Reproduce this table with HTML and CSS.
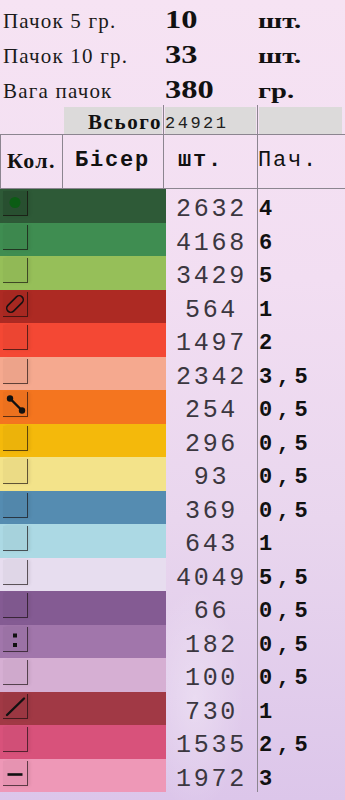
FILE: index.html
```html
<!DOCTYPE html>
<html lang="uk">
<head>
<meta charset="utf-8">
<title>Бісер</title>
<link rel="stylesheet" href="styles.css">
</head>
<body>
<div class="page">
  <div class="summary">
    <div class="srow"><span class="slabel">Пачок 5 гр.</span><span class="sval">10</span><span class="sunit">шт.</span></div>
    <div class="srow"><span class="slabel">Пачок 10 гр.</span><span class="sval">33</span><span class="sunit">шт.</span></div>
    <div class="srow"><span class="slabel">Вага пачок</span><span class="sval">380</span><span class="sunit">гр.</span></div>
  </div>

  <div class="total">
    <div class="tcell tcell-empty"></div>
    <div class="tcell"><div class="tbox tbox-label">Всього</div></div>
    <div class="tcell tcell-line"><div class="tbox tbox-num">24921</div></div>
    <div class="tcell tcell-line"><div class="tbox"></div></div>
  </div>

  <div class="head">
    <div class="hcell hcell-first"><span class="h-serif">Кол.</span></div>
    <div class="hcell hcell-bead"><span class="h-mono h-bold">Бісер</span></div>
    <div class="hcell hcell-pcs"><span class="h-mono h-bold">шт.</span></div>
    <div class="hcell hcell-pack"><span class="h-mono">Пач.</span></div>
  </div>

  <div class="body">
    <div class="row"><div class="swatch c1"><span class="mark mark-dark"><svg viewBox="0 0 24 24" width="24" height="24"><circle cx="12" cy="11.5" r="5.5" fill="#0b5c14"/></svg></span></div><div class="num">2632</div><div class="pack">4</div></div>
    <div class="row"><div class="swatch c2"><span class="mark"></span></div><div class="num">4168</div><div class="pack">6</div></div>
    <div class="row"><div class="swatch c3"><span class="mark"></span></div><div class="num">3429</div><div class="pack">5</div></div>
    <div class="row"><div class="swatch c4"><span class="mark"><svg viewBox="0 0 24 24" width="24" height="24"><rect x="2" y="8" width="20" height="8" rx="4" transform="rotate(-45 12 12)" fill="none" stroke="#151010" stroke-width="1.6"/></svg></span></div><div class="num">564</div><div class="pack">1</div></div>
    <div class="row"><div class="swatch c5"><span class="mark"></span></div><div class="num">1497</div><div class="pack">2</div></div>
    <div class="row"><div class="swatch c6"><span class="mark"></span></div><div class="num">2342</div><div class="pack">3,5</div></div>
    <div class="row"><div class="swatch c7"><span class="mark"><svg viewBox="0 0 24 24" width="24" height="24"><line x1="7" y1="6.5" x2="19" y2="18.5" stroke="#111" stroke-width="2.4"/><circle cx="7" cy="6.5" r="3.2" fill="#111"/><circle cx="19" cy="18.5" r="3.2" fill="#111"/></svg></span></div><div class="num">254</div><div class="pack">0,5</div></div>
    <div class="row"><div class="swatch c8"><span class="mark"></span></div><div class="num">296</div><div class="pack">0,5</div></div>
    <div class="row"><div class="swatch c9"><span class="mark"></span></div><div class="num">93</div><div class="pack">0,5</div></div>
    <div class="row"><div class="swatch c10"><span class="mark"></span></div><div class="num">369</div><div class="pack">0,5</div></div>
    <div class="row"><div class="swatch c11"><span class="mark"></span></div><div class="num">643</div><div class="pack">1</div></div>
    <div class="row"><div class="swatch c12"><span class="mark"></span></div><div class="num">4049</div><div class="pack">5,5</div></div>
    <div class="row"><div class="swatch c13"><span class="mark"></span></div><div class="num">66</div><div class="pack">0,5</div></div>
    <div class="row"><div class="swatch c14"><span class="mark"><svg viewBox="0 0 24 24" width="24" height="24"><rect x="10" y="6.5" width="4" height="4" fill="#111"/><rect x="10" y="16" width="4" height="4" fill="#111"/></svg></span></div><div class="num">182</div><div class="pack">0,5</div></div>
    <div class="row"><div class="swatch c15"><span class="mark"></span></div><div class="num">100</div><div class="pack">0,5</div></div>
    <div class="row"><div class="swatch c16"><span class="mark"><svg viewBox="0 0 24 24" width="24" height="24"><line x1="4" y1="21" x2="21" y2="4.5" stroke="#111" stroke-width="2.4" stroke-linecap="round"/></svg></span></div><div class="num">730</div><div class="pack">1</div></div>
    <div class="row"><div class="swatch c17"><span class="mark"></span></div><div class="num">1535</div><div class="pack">2,5</div></div>
    <div class="row"><div class="swatch c18"><span class="mark"><svg viewBox="0 0 24 24" width="24" height="24"><line x1="4.5" y1="13.5" x2="19.5" y2="13.5" stroke="#111" stroke-width="2.6"/></svg></span></div><div class="num">1972</div><div class="pack">3</div></div>
  </div>
</div>
</body>
</html>
```

FILE: styles.css
```css
* { box-sizing: border-box; }

html, body {
  margin: 0;
  padding: 0;
  overflow: hidden;
}

body {
  width: 345px;
  height: 800px;
  background:
    radial-gradient(ellipse 70px 160px at 195px 700px, rgba(255,255,255,0.30), rgba(255,255,255,0) 70%),
    linear-gradient(180deg, #f6e3f3 0%, #f2def2 35%, #e9d6ee 65%, #dcc6ea 100%);
  color: #111;
}

.page {
  width: 345px;
  height: 800px;
  overflow: hidden;
}

/* ---------- summary ---------- */
.summary {
  padding-left: 3px;
}

.srow {
  display: grid;
  grid-template-columns: 162px 93px 1fr;
  align-items: baseline;
  height: 35px;
  padding-top: 8px;
}

.slabel {
  font-family: "Liberation Serif", serif;
  font-size: 21px;
  line-height: 21px;
  letter-spacing: 1.2px;
  color: #1a1a1a;
}

.sval {
  font-family: "Liberation Serif", serif;
  font-weight: bold;
  font-size: 25px;
  line-height: 24px;
  display: inline-block;
  transform: scaleX(1.3);
  transform-origin: left center;
  color: #111;
}

.sunit {
  font-family: "Liberation Serif", serif;
  font-weight: bold;
  font-size: 22px;
  line-height: 21px;
  display: inline-block;
  transform: scaleX(1.3);
  transform-origin: left center;
  color: #111;
}

/* ---------- total row ---------- */
.total {
  display: grid;
  grid-template-columns: 62px 101px 94px 88px;
  height: 29px;
}

.tcell-line {
  border-left: 1px solid #8c8590;
}

.tbox {
  height: 27px;
  margin: 2px 1px 0 1px;
  background: #dcdada;
}

.tcell:nth-child(2) .tbox {
  margin-left: 2px;
}

.tcell:nth-child(4) .tbox {
  margin-right: 3px;
}

.tbox-label {
  text-align: right;
  padding-top: 5px;
  font-family: "Liberation Serif", serif;
  font-weight: bold;
  font-size: 21px;
  line-height: 21px;
  letter-spacing: 1.6px;
}

.tbox-num {
  padding-top: 8px;
  font-family: "Liberation Mono", monospace;
  font-size: 17px;
  line-height: 17px;
  letter-spacing: 2.5px;
  color: #222;
}

/* ---------- header ---------- */
.head {
  display: grid;
  grid-template-columns: 62px 101px 94px 88px;
  height: 55px;
  border-top: 1px solid #8c8590;
  border-bottom: 1px solid #8c8590;
}

.hcell {
  border-left: 1px solid #8c8590;
}

.hcell-first {
  padding: 15px 0 0 6px;
}

.hcell-bead {
  padding: 15px 0 0 12px;
}

.hcell-pcs {
  padding: 15px 0 0 14px;
}

.hcell-pack {
  padding: 15px 0 0 0;
}

.h-serif {
  font-family: "Liberation Serif", serif;
  font-weight: bold;
  font-size: 22px;
  line-height: 22px;
  letter-spacing: 1.4px;
}

.h-mono {
  font-family: "Liberation Mono", monospace;
  font-size: 22px;
  line-height: 22px;
  letter-spacing: 1.8px;
  color: #111;
}

.h-bold {
  font-weight: bold;
}

/* ---------- body rows ---------- */
.row {
  display: grid;
  grid-template-columns: 166px 91px 1fr;
  height: 33.5px;
}

.swatch {
  padding: 2px 0 0 3px;
}

.mark {
  display: block;
  width: 25px;
  height: 25px;
  border-right: 1px solid rgba(20, 10, 10, 0.65);
  border-bottom: 1px solid rgba(20, 10, 10, 0.65);
  background: rgba(0, 0, 0, 0.03);
  box-shadow: 2px 0 3px rgba(0, 0, 0, 0.08);
}

.mark svg {
  display: block;
}

.mark-dark {
  background: rgba(0, 0, 0, 0.12);
}

.num {
  text-align: center;
  padding-top: 8px;
  font-family: "Liberation Mono", monospace;
  font-size: 25px;
  line-height: 25px;
  letter-spacing: 2.7px;
  color: #3b3740;
}

.pack {
  border-left: 1px solid #8c8590;
  padding: 10px 0 0 1px;
  font-family: "Liberation Mono", monospace;
  font-weight: bold;
  font-size: 22px;
  line-height: 22px;
  letter-spacing: 4.6px;
  color: #111;
}

.c1 { background: #2e5a37; }
.c2 { background: #3f8d51; }
.c3 { background: #96bf59; }
.c4 { background: #ad2a23; }
.c5 { background: #f44834; }
.c6 { background: #f5a98f; }
.c7 { background: #f4751f; }
.c8 { background: #f4b90b; }
.c9 { background: #f3e38a; }
.c10 { background: #558cb1; }
.c11 { background: #acd9e4; }
.c12 { background: #e7ddef; }
.c13 { background: #845b93; }
.c14 { background: #a176ab; }
.c15 { background: #d6afd3; }
.c16 { background: #a13945; }
.c17 { background: #d8527b; }
.c18 { background: #ee98b7; }
```
